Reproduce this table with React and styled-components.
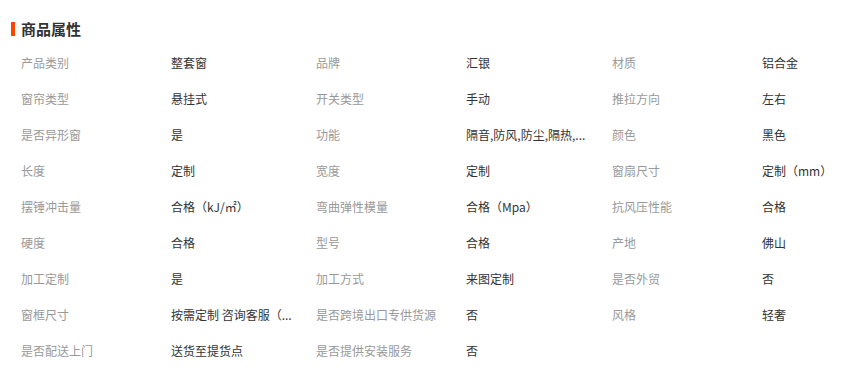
import styled, { createGlobalStyle } from 'styled-components'

const GlobalStyle = createGlobalStyle`
  body {
    margin: 0;
    background: #fff;
    font-family: "Noto Sans CJK SC", "Noto Sans", sans-serif;
  }
`

const attrs = [
  ['产品类别', '整套窗'],
  ['品牌', '汇银'],
  ['材质', '铝合金'],
  ['窗帘类型', '悬挂式'],
  ['开关类型', '手动'],
  ['推拉方向', '左右'],
  ['是否异形窗', '是'],
  ['功能', '隔音,防风,防尘,隔热,...'],
  ['颜色', '黑色'],
  ['长度', '定制'],
  ['宽度', '定制'],
  ['窗扇尺寸', '定制（mm）'],
  ['摆锤冲击量', '合格（kJ/㎡）'],
  ['弯曲弹性模量', '合格（Mpa）'],
  ['抗风压性能', '合格'],
  ['硬度', '合格'],
  ['型号', '合格'],
  ['产地', '佛山'],
  ['加工定制', '是'],
  ['加工方式', '来图定制'],
  ['是否外贸', '否'],
  ['窗框尺寸', '按需定制 咨询客服（...'],
  ['是否跨境出口专供货源', '否'],
  ['风格', '轻奢'],
  ['是否配送上门', '送货至提货点'],
  ['是否提供安装服务', '否'],
]

const App = () => {
  return (
    <Wrapper>
      <GlobalStyle />
      <Title>商品属性</Title>
      <Grid>
        {attrs.map(([label, value]) => (
          <Item key={label}>
            <Label>{label}</Label>
            <Value>{value}</Value>
          </Item>
        ))}
      </Grid>
    </Wrapper>
  )
}

export default App

const Wrapper = styled.div`
  padding: 19px 0 0 11px;
`

const Title = styled.h3`
  margin: 0;
  height: 20px;
  line-height: 20px;
  padding-left: 6px;
  border-left: 4px solid #ff4400;
  border-image: linear-gradient(to bottom, transparent 4px, #ff4400 4px, #ff4400 16px, transparent 16px) 1;
  font-size: 15px;
  font-weight: bold;
  color: #333;
`

const Grid = styled.div`
  margin-top: 5px;
  padding-left: 10px;
  display: grid;
  grid-template-columns: 295px 296px 1fr;
`

const Item = styled.div`
  display: flex;
  height: 36px;
  align-items: center;
  font-size: 12px;
`

const Label = styled.span`
  width: 150px;
  flex-shrink: 0;
  color: #999;
`

const Value = styled.span`
  color: #333;
  white-space: nowrap;
`
